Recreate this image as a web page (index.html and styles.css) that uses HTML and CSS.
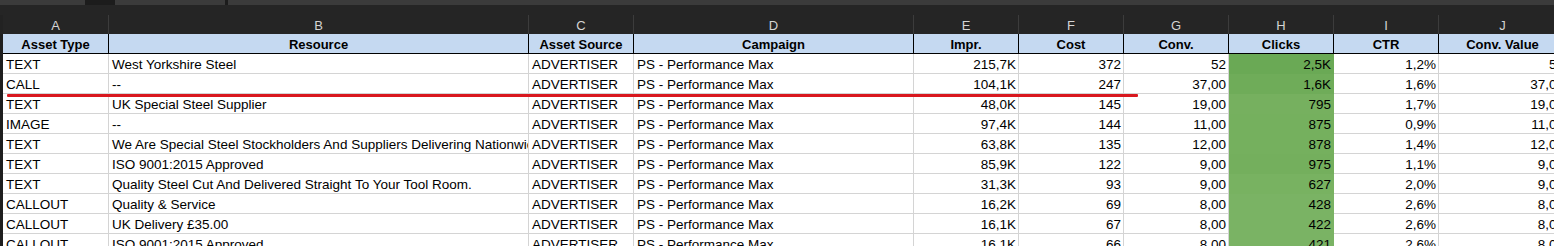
FILE: index.html
```html
<!DOCTYPE html>
<html>
<head>
<meta charset="utf-8">
<link rel="stylesheet" href="styles.css">
</head>
<body>
<div class="app">
  <div class="tabs">
    <div class="tab t1"></div>
    <div class="tab-gap g1"></div>
    <div class="tab t2"></div>
    <div class="tab-gap g2"></div>
    <div class="tab t3"></div>
  </div>
  <div class="sheet">
    <div class="letters">
      <div class="lh"></div>
      <div class="lc">A</div><div class="lc">B</div><div class="lc">C</div><div class="lc">D</div><div class="lc">E</div><div class="lc">F</div><div class="lc">G</div><div class="lc">H</div><div class="lc">I</div><div class="lc">J</div>
    </div>
    <div class="grid">
      <div class="rh"></div>
      <div class="hc">Asset Type</div><div class="hc">Resource</div><div class="hc">Asset Source</div><div class="hc">Campaign</div><div class="hc">Impr.</div><div class="hc">Cost</div><div class="hc">Conv.</div><div class="hc">Clicks</div><div class="hc">CTR</div><div class="hc">Conv. Value</div>

      <div class="rh"></div>
      <div class="c">TEXT</div><div class="c">West Yorkshire Steel</div><div class="c">ADVERTISER</div><div class="c">PS - Performance Max</div><div class="c n">215,7K</div><div class="c n">372</div><div class="c n">52</div><div class="c n g" style="background:#6aa955;border-color:#6aa955">2,5K</div><div class="c n">1,2%</div><div class="c n">52</div>

      <div class="rh"></div>
      <div class="c">CALL</div><div class="c">--</div><div class="c">ADVERTISER</div><div class="c">PS - Performance Max</div><div class="c n">104,1K</div><div class="c n">247</div><div class="c n">37,00</div><div class="c n g" style="background:#6fac59;border-color:#6fac59">1,6K</div><div class="c n">1,6%</div><div class="c n">37,00</div>

      <div class="rh"></div>
      <div class="c">TEXT</div><div class="c">UK Special Steel Supplier</div><div class="c">ADVERTISER</div><div class="c">PS - Performance Max</div><div class="c n">48,0K</div><div class="c n">145</div><div class="c n">19,00</div><div class="c n g" style="background:#76b05f;border-color:#76b05f">795</div><div class="c n">1,7%</div><div class="c n">19,00</div>

      <div class="rh"></div>
      <div class="c">IMAGE</div><div class="c">--</div><div class="c">ADVERTISER</div><div class="c">PS - Performance Max</div><div class="c n">97,4K</div><div class="c n">144</div><div class="c n">11,00</div><div class="c n g" style="background:#75b05e;border-color:#75b05e">875</div><div class="c n">0,9%</div><div class="c n">11,00</div>

      <div class="rh"></div>
      <div class="c">TEXT</div><div class="c">We Are Special Steel Stockholders And Suppliers Delivering Nationwide</div><div class="c">ADVERTISER</div><div class="c">PS - Performance Max</div><div class="c n">63,8K</div><div class="c n">135</div><div class="c n">12,00</div><div class="c n g" style="background:#75b05e;border-color:#75b05e">878</div><div class="c n">1,4%</div><div class="c n">12,00</div>

      <div class="rh"></div>
      <div class="c">TEXT</div><div class="c">ISO 9001:2015 Approved</div><div class="c">ADVERTISER</div><div class="c">PS - Performance Max</div><div class="c n">85,9K</div><div class="c n">122</div><div class="c n">9,00</div><div class="c n g" style="background:#74af5d;border-color:#74af5d">975</div><div class="c n">1,1%</div><div class="c n">9,00</div>

      <div class="rh"></div>
      <div class="c">TEXT</div><div class="c">Quality Steel Cut And Delivered Straight To Your Tool Room.</div><div class="c">ADVERTISER</div><div class="c">PS - Performance Max</div><div class="c n">31,3K</div><div class="c n">93</div><div class="c n">9,00</div><div class="c n g" style="background:#78b261;border-color:#78b261">627</div><div class="c n">2,0%</div><div class="c n">9,00</div>

      <div class="rh"></div>
      <div class="c">CALLOUT</div><div class="c">Quality &amp; Service</div><div class="c">ADVERTISER</div><div class="c">PS - Performance Max</div><div class="c n">16,2K</div><div class="c n">69</div><div class="c n">8,00</div><div class="c n g" style="background:#7ab364;border-color:#7ab364">428</div><div class="c n">2,6%</div><div class="c n">8,00</div>

      <div class="rh"></div>
      <div class="c">CALLOUT</div><div class="c">UK Delivery £35.00</div><div class="c">ADVERTISER</div><div class="c">PS - Performance Max</div><div class="c n">16,1K</div><div class="c n">67</div><div class="c n">8,00</div><div class="c n g" style="background:#7ab364;border-color:#7ab364">422</div><div class="c n">2,6%</div><div class="c n">8,00</div>

      <div class="rh"></div>
      <div class="c">CALLOUT</div><div class="c">ISO 9001:2015 Approved</div><div class="c">ADVERTISER</div><div class="c">PS - Performance Max</div><div class="c n">16,1K</div><div class="c n">66</div><div class="c n">8,00</div><div class="c n g" style="background:#7ab364;border-color:#7ab364">421</div><div class="c n">2,6%</div><div class="c n">8,00</div>
    </div>
    <div class="redline"></div>
  </div>
</div>
</body>
</html>
```

FILE: styles.css
```css
html, body {
  margin: 0;
  padding: 0;
  background: #252525;
  overflow: hidden;
}
.app {
  width: 1554px;
  height: 246px;
  overflow: hidden;
  background: #252525;
  font-family: "Liberation Sans", Arial, sans-serif;
}
.tabs {
  display: flex;
  height: 5px;
}
.tab { background: #3b3b3b; }
.tab-gap { background: #1c1c1c; }
.t1 { width: 85px; }
.g1 { width: 30px; }
.t2 { width: 110px; }
.g2 { width: 3px; }
.t3 { flex: 1; }

.sheet {
  position: relative;
  margin-top: 10px;
}
.letters, .grid {
  display: grid;
  grid-template-columns: 3px 106px 420px 105px 280px 105px 105px 105px 105px 105px 128px;
}
.letters {
  height: 19px;
}
.lh { background: #222; }
.lc {
  box-sizing: border-box;
  border-right: 1px solid #3c3c3c;
  color: #d4d4d4;
  font-size: 13px;
  text-align: center;
  line-height: 21px;
}
.rh {
  background: #1e1e1e;
}
.hc, .c {
  box-sizing: border-box;
  height: 20px;
  white-space: nowrap;
  overflow: hidden;
  color: #000;
  font-size: 13.5px;
  line-height: 22px;
}
.hc {
  background: #c5d9f1;
  border-right: 1px solid #000;
  border-bottom: 1px solid #000;
  font-weight: bold;
  font-size: 13px;
  line-height: 21px;
  text-align: center;
}
.c {
  background: #fff;
  border-right: 1px solid #d4d4d4;
  border-bottom: 1px solid #d4d4d4;
  padding: 0 2px 0 3px;
  text-overflow: clip;
}
.n {
  text-align: right;
  padding: 0 2px 0 2px;
}
.redline {
  position: absolute;
  left: 7px;
  top: 79px;
  width: 1131px;
  height: 2.5px;
  background: #d9181f;
  border-radius: 1px;
}
```
